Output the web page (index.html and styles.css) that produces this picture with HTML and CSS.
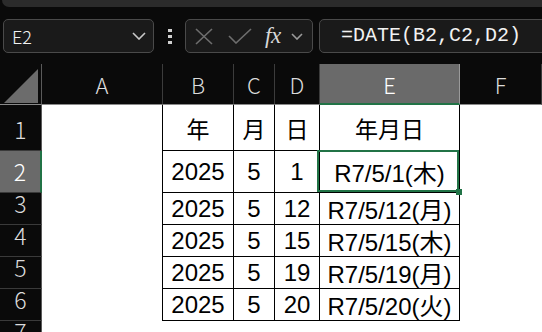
FILE: index.html
```html
<!DOCTYPE html>
<html lang="ja">
<head>
    <meta charset="UTF-8">
    <meta name="viewport" content="width=device-width, initial-scale=1.0">
    <title>DATE関数</title>
    <link rel="stylesheet" href="styles.css">
</head>
<body>
    <div class="ribbon-edge"></div>

    <div class="formula-bar">
        <div class="name-box">
            <span>E2</span>
            <svg class="chev" width="14" height="8" viewBox="0 0 14 8"><polyline points="1,1 7,7 13,1"/></svg>
        </div>
        <div class="dots"><i></i><i></i><i></i></div>
        <div class="fx-box">
            <svg class="ico-x" width="18" height="17" viewBox="0 0 18 17"><path d="M1 1 L17 16 M17 1 L1 16"/></svg>
            <svg class="ico-ok" width="24" height="16" viewBox="0 0 24 16"><polyline points="1,8 8,15 23,1"/></svg>
            <span class="fx">fx</span>
            <svg class="chev small" width="12" height="7" viewBox="0 0 12 7"><polyline points="1,1 6,6 11,1"/></svg>
        </div>
        <div class="formula">=DATE(B2,C2,D2)</div>
    </div>

    <div class="sheet">
        <div class="corner"><svg width="34" height="34" viewBox="0 0 34 34"><polygon points="0,34 34,34 34,0"/></svg></div>
        <div class="col-hd">A</div>
        <div class="col-hd">B</div>
        <div class="col-hd">C</div>
        <div class="col-hd">D</div>
        <div class="col-hd sel">E</div>
        <div class="col-hd">F</div>

        <div class="row-hd">1</div>
        <div class="blank edge"></div>
        <div class="c jp">年</div>
        <div class="c jp">月</div>
        <div class="c jp">日</div>
        <div class="c jp">年月日</div>
        <div class="blank"></div>

        <div class="row-hd sel">2</div>
        <div class="blank edge"></div>
        <div class="c">2025</div>
        <div class="c">5</div>
        <div class="c">1</div>
        <div class="c active">R7/5/1(木)<span class="handle"></span></div>
        <div class="blank"></div>

        <div class="row-hd">3</div>
        <div class="blank edge"></div>
        <div class="c">2025</div>
        <div class="c">5</div>
        <div class="c">12</div>
        <div class="c">R7/5/12(月)</div>
        <div class="blank"></div>

        <div class="row-hd">4</div>
        <div class="blank edge"></div>
        <div class="c">2025</div>
        <div class="c">5</div>
        <div class="c">15</div>
        <div class="c">R7/5/15(木)</div>
        <div class="blank"></div>

        <div class="row-hd">5</div>
        <div class="blank edge"></div>
        <div class="c">2025</div>
        <div class="c">5</div>
        <div class="c">19</div>
        <div class="c">R7/5/19(月)</div>
        <div class="blank"></div>

        <div class="row-hd">6</div>
        <div class="blank edge"></div>
        <div class="c">2025</div>
        <div class="c">5</div>
        <div class="c">20</div>
        <div class="c">R7/5/20(火)</div>
        <div class="blank"></div>

        <div class="row-hd">7</div>
        <div class="blank"></div>
        <div class="blank"></div>
        <div class="blank"></div>
        <div class="blank"></div>
        <div class="blank"></div>
        <div class="blank"></div>
    </div>
</body>
</html>
```

FILE: styles.css
```css
body {
    margin: 0;
    background-color: #0a0a0a;
    font-family: "Noto Sans CJK JP", "Noto Sans", sans-serif;
    overflow: hidden;
    width: 542px;
    height: 332px;
}

.ribbon-edge {
    height: 7px;
    margin-left: 2px;
    background-color: #2b2b2b;
    border-radius: 0 0 0 9px;
}

/* formula bar */
.formula-bar {
    display: flex;
    align-items: stretch;
    height: 34px;
    margin-top: 12px;
    padding-left: 3px;
}
.name-box,
.fx-box,
.formula {
    box-sizing: border-box;
    border: 1px solid #4a4a4a;
    border-radius: 5px;
    background-color: #1a1a1a;
    color: #f2f2f2;
}
.name-box {
    width: 151px;
    display: flex;
    align-items: center;
    justify-content: space-between;
    padding: 0 7px 0 8px;
    font-size: 18px;
    font-weight: 300;
}
.chev polyline {
    fill: none;
    stroke: #c8c8c8;
    stroke-width: 1.6;
}
.chev.small polyline {
    stroke: #9a9a9a;
}
.dots {
    width: 31px;
    display: flex;
    flex-direction: column;
    align-items: center;
    justify-content: center;
    gap: 3px;
}
.dots i {
    display: block;
    width: 4px;
    height: 3px;
    background-color: #d0d0d0;
}
.fx-box {
    width: 128px;
    display: flex;
    align-items: center;
    padding-left: 9px;
}
.ico-x path,
.ico-ok polyline {
    fill: none;
    stroke: #6e6e6e;
    stroke-width: 1.6;
}
.ico-ok {
    margin-left: 15px;
}
.fx {
    margin-left: 13px;
    font-family: "Liberation Serif", serif;
    font-style: italic;
    font-size: 23px;
    color: #d8d8d8;
    letter-spacing: -0.5px;
}
.chev.small {
    margin-left: 10px;
}
.formula {
    flex: 1;
    margin-left: 6px;
    margin-right: -8px;
    padding-left: 21px;
    font-family: "Liberation Mono", "DejaVu Sans Mono", monospace;
    font-size: 20px;
    line-height: 32px;
}

/* sheet */
.sheet {
    display: grid;
    grid-template-columns: 42px 121px 71px 41px 45px 140px 1fr;
    grid-template-rows: 41px 46px 42px 32px 32px 32px 32px 32px;
    margin-top: 11px;
}
.sheet > div {
    box-sizing: border-box;
}
.corner {
    border-right: 1px solid #5a5a5a;
    border-bottom: 1px solid #8a8a8a;
    display: flex;
    align-items: flex-end;
    padding: 0 0 1px 4px;
}
.corner polygon {
    fill: #6c6c6c;
}
.col-hd,
.row-hd {
    display: flex;
    justify-content: center;
    color: #dcdcdc;
    font-weight: 300;
    background-color: #0a0a0a;
}
.col-hd {
    align-items: center;
    font-size: 22px;
    border-right: 1px solid #3c3c3c;
    border-bottom: 1px solid #8a8a8a;
}
.col-hd.sel {
    background-color: #6a6a6a;
    color: #ffffff;
    border-right-color: #9a9a9a;
    border-bottom: 2px solid #217346;
}
.row-hd {
    align-items: flex-end;
    padding-bottom: 4px;
    font-size: 23px;
    border-right: 1px solid #5a5a5a;
    border-bottom: 1px solid #3a3a3a;
}
.row-hd.sel {
    background-color: #6a6a6a;
    color: #ffffff;
    border-right: 2px solid #217346;
}
.blank {
    background-color: #ffffff;
}
.blank.edge {
    border-right: 1px solid #000000;
}
.c {
    display: flex;
    align-items: center;
    justify-content: center;
    background-color: #ffffff;
    border-right: 1px solid #000000;
    border-bottom: 1px solid #000000;
    color: #000000;
    font-family: "Liberation Sans", "Noto Sans CJK JP", sans-serif;
    font-size: 24px;
    white-space: nowrap;
}
.c.jp {
    font-family: "Noto Sans CJK JP", sans-serif;
    font-size: 23px;
}
.active {
    position: relative;
}
.active::after {
    content: "";
    position: absolute;
    left: -3px;
    top: -1px;
    right: 0;
    bottom: 0;
    border: 2px solid #217346;
}
.handle {
    position: absolute;
    right: -3px;
    bottom: -3px;
    width: 6px;
    height: 6px;
    background-color: #217346;
    z-index: 1;
}
```
